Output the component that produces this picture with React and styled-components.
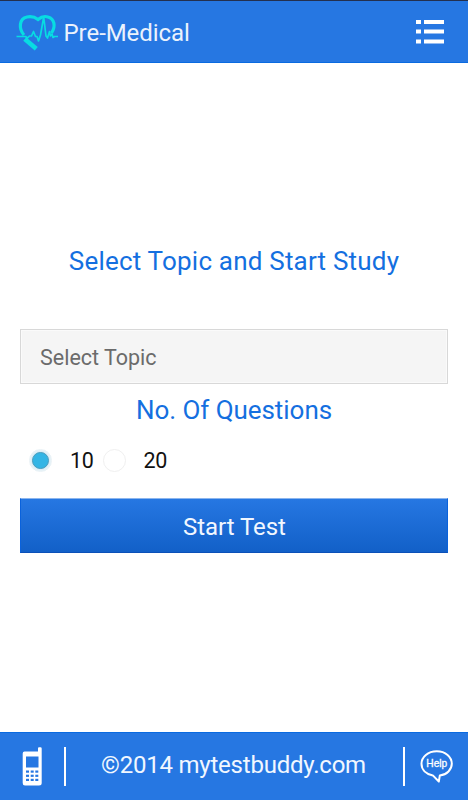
import { useState } from "react";
import { createGlobalStyle, styled } from "styled-components";

const GlobalStyle = createGlobalStyle`
    * {
        box-sizing: border-box;
    }

    body {
        margin: 0;
        background-color: #fff;
        font-family: Roboto, "Open Sans", sans-serif;
    }
`

const Screen = styled.div`
    display: flex;
    flex-direction: column;
    height: 100vh;
    overflow: hidden;
`

const Header = styled.header`
    display: flex;
    align-items: center;
    height: 63px;
    flex-shrink: 0;
    padding: 0 24px 0 16px;
    background-color: #2677e2;
    border-top: 1px solid #23304f;
    border-bottom: 1px solid #0a6ae0;
`

const AppName = styled.h1`
    flex: 1;
    margin: 3px 0 0 4.5px;
    font-size: 24px;
    line-height: 28px;
    font-weight: 400;
    letter-spacing: -0.05px;
    color: #eaf2fd;
`

const MenuButton = styled.button`
    display: flex;
    margin-top: 1px;
    padding: 0;
    border: 0;
    background: none;
`

const Main = styled.main`
    flex: 1;
    display: flex;
    flex-direction: column;
    padding: 0 20px;
`

const Heading = styled.h2`
    margin: ${({ $top }) => $top}px 0 0;
    font-size: 26px;
    line-height: 32px;
    font-weight: 400;
    letter-spacing: ${({ $spacing }) => $spacing}px;
    text-align: center;
    color: #146fe0;
`

const TopicInput = styled.input`
    height: 55px;
    margin-top: 52px;
    padding: 2px 19px 0;
    border: 1px solid #d8d8d8;
    border-radius: 0;
    outline: none;
    background-color: #f5f5f5;
    box-shadow: inset 0 0 0 1px #fafafa;
    font-family: inherit;
    font-size: 21.5px;
    letter-spacing: 0;

    &::placeholder {
        color: #6b6b6b;
        opacity: 1;
    }
`

const Options = styled.div`
    display: flex;
    align-items: center;
    gap: 9px;
    height: 26px;
    margin: 21px 0 0 9px;
`

const Option = styled.label`
    display: flex;
    align-items: center;
    gap: 18px;
    font-size: 21.5px;
    line-height: 26px;
    letter-spacing: -0.3px;
    color: #111;
`

const OptionText = styled.span`
    padding-top: 2px;
`

const Radio = styled.input`
    appearance: none;
    display: grid;
    place-items: center;
    width: 23px;
    height: 23px;
    margin: 0;
    border: 1px solid #f0f0f0;
    border-radius: 50%;
    background-color: #fff;

    &:checked {
        border-color: #e9f2f6;
        background: radial-gradient(circle, #b9dfef 6px, #e6f2f8 10px);
    }

    &:checked::before {
        content: "";
        width: 15px;
        height: 15px;
        border: 1px solid #4a9dbd;
        border-radius: 50%;
        background-color: #33b5e5;
    }
`

const StartButton = styled.button`
    height: 55px;
    margin-top: 25px;
    padding: 2px 0 0 1px;
    border: 1px solid #0b50b8;
    border-top-color: #8bb5ee;
    border-left-color: #0a62dc;
    border-right-color: #0a62dc;
    background: linear-gradient(#2677e2, #1260c8);
    font-family: inherit;
    font-size: 24px;
    letter-spacing: -0.05px;
    color: #f1f7ff;
`

const Footer = styled.footer`
    display: flex;
    align-items: center;
    height: 68px;
    flex-shrink: 0;
    padding: 0 14px 0 22px;
    background-color: #2677e2;
    border-top: 1px solid #0a6ae0;
`

const Divider = styled.span`
    width: 2px;
    height: 39px;
    margin: ${({ $margin }) => $margin};
    background-color: #fff;
`

const Copyright = styled.p`
    flex: 1;
    margin: 0 2px 4px 0;
    font-size: 24px;
    line-height: 28px;
    letter-spacing: -0.22px;
    text-align: center;
    color: #f1f7ff;
`

function HeartLogo() {
    return (
        <svg width="43" height="38" viewBox="0 0 43 38" fill="none" stroke="#08dce2">
            <path d="M8 22C2.5 16 3 5.5 11 4C16 3 19.5 4.5 22 6.5C25.5 3.5 29 3 32 4C38.5 6 40 13 35.5 20" strokeWidth="3.2" />
            <path d="M10.5 27.5L18.5 34.2" strokeWidth="4.6" strokeLinejoin="round" strokeLinecap="square" />
            <path
                d="M0.5 23.5H9.5L11.5 25L13.5 23H15.5L17.5 18.5L19.5 23.5H21L22.5 28L24.5 22L27.7 4L30 23L31.5 25L33.5 18.5L34.5 23L36 21L37 24.5L38.5 23.5H42"
                strokeWidth="1.7"
                strokeLinejoin="round"
            />
        </svg>
    );
}

function MenuIcon() {
    return (
        <svg width="28" height="25" viewBox="0 0 28 25" fill="#fff">
            {[0, 9.5, 19.5].map((y) => (
                <g key={y}>
                    <rect x="0" y={y} width="5" height="4" />
                    <rect x="8" y={y} width="20" height="4" />
                </g>
            ))}
        </svg>
    );
}

function PhoneIcon() {
    return (
        <svg width="21" height="40" viewBox="0 0 21 40">
            <path d="M2.5 4.5H16V1.5Q16 0.3 17 0.3H18.5Q19.7 0.3 19.7 1.5V36Q19.7 38.5 17 38.5H3Q0.7 38.5 0.7 36V6.5Q0.7 4.5 2.5 4.5Z" fill="#fff" />
            <rect x="4" y="9.5" width="12.5" height="11" fill="#2677e2" />
            {[23.5, 27.7, 31.8].map((y) => (
                <g key={y} fill="#2677e2">
                    <rect x="4" y={y} width="3" height="2.2" />
                    <rect x="8.7" y={y} width="3" height="2.2" />
                    <rect x="13.3" y={y} width="3" height="2.2" />
                </g>
            ))}
        </svg>
    );
}

function HelpIcon() {
    return (
        <svg width="34" height="36" viewBox="0 0 34 36">
            <path
                d="M12.8 26.4C5.8 25 1.5 20.5 1.5 14.8C1.5 7.8 8 2.3 16.8 2.3C25.5 2.3 31.8 7.8 31.8 14.8C31.8 20.5 27 25.5 19.8 26.6L18.8 32.5Z"
                fill="none"
                stroke="#fff"
                strokeWidth="2"
                strokeLinejoin="round"
            />
            <text x="16.8" y="18.2" textAnchor="middle" fontSize="10.2" fontFamily="Liberation Sans, sans-serif" fill="#fff" stroke="#fff" strokeWidth="0.3">
                Help
            </text>
        </svg>
    );
}

function App() {
    const [count, setCount] = useState(10);

    return (
        <Screen>
            <GlobalStyle />
            <Header>
                <HeartLogo />
                <AppName>Pre-Medical</AppName>
                <MenuButton aria-label="Menu">
                    <MenuIcon />
                </MenuButton>
            </Header>
            <Main>
                <Heading $top={182} $spacing={0.2}>Select Topic and Start Study</Heading>
                <TopicInput placeholder="Select Topic" />
                <Heading $top={10} $spacing={-0.05}>No. Of Questions</Heading>
                <Options>
                    {[10, 20].map((n) => (
                        <Option key={n}>
                            <Radio type="radio" name="count" checked={count === n} onChange={() => setCount(n)} />
                            <OptionText>{n}</OptionText>
                        </Option>
                    ))}
                </Options>
                <StartButton>Start Test</StartButton>
            </Main>
            <Footer>
                <PhoneIcon />
                <Divider $margin="0 0 0 21px" />
                <Copyright>©2014 mytestbuddy.com</Copyright>
                <Divider $margin="0 15px 0 0" />
                <HelpIcon />
            </Footer>
        </Screen>
    );
}

export default App;
